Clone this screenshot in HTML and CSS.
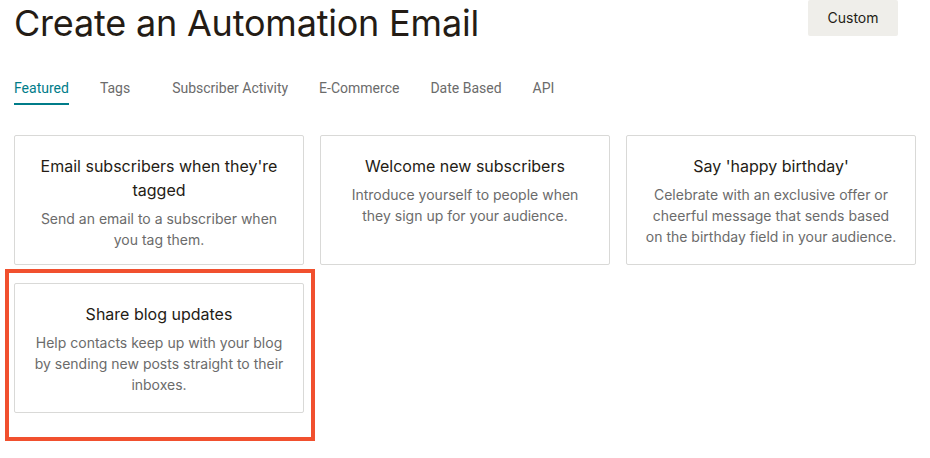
FILE: index.html
```html
<!DOCTYPE html>
<html lang="en">
<head>
<meta charset="utf-8">
<title>Create an Automation Email</title>
<link rel="stylesheet" href="styles.css">
</head>
<body>
<div class="page">
  <header class="header">
    <h1 class="title">Create an Automation Email</h1>
    <button class="custom-btn" type="button">Custom</button>
  </header>
  <nav class="tabs">
    <a class="tab is-active">Featured</a>
    <a class="tab tab-tags">Tags</a>
    <a class="tab">Subscriber Activity</a>
    <a class="tab">E-Commerce</a>
    <a class="tab">Date Based</a>
    <a class="tab">API</a>
  </nav>
  <section class="cards">
    <div class="card">
      <h2 class="card-title">Email subscribers when they're tagged</h2>
      <p class="card-desc">Send an email to a subscriber when you tag them.</p>
    </div>
    <div class="card">
      <h2 class="card-title">Welcome new subscribers</h2>
      <p class="card-desc">Introduce yourself to people when they sign up for your audience.</p>
    </div>
    <div class="card">
      <h2 class="card-title">Say 'happy birthday'</h2>
      <p class="card-desc">Celebrate with an exclusive offer or cheerful message that sends based on the birthday field in your audience.</p>
    </div>
    <div class="card card-highlighted">
      <h2 class="card-title">Share blog updates</h2>
      <p class="card-desc">Help contacts keep up with your blog by sending new posts straight to their inboxes.</p>
      <span class="highlight-box"></span>
    </div>
  </section>
</div>
</body>
</html>
```

FILE: styles.css
```css
* { box-sizing: border-box; }
html, body { margin: 0; padding: 0; background: #ffffff; }
body {
  font-family: "Inter", "Liberation Sans", sans-serif;
  color: #241c15;
  min-height: 100vh;
}

.page { padding: 0 32px 60px 14px; }

.header {
  display: flex;
  justify-content: space-between;
  align-items: flex-start;
  height: 62px;
}
.title {
  margin: 2px 0 0 0;
  font-size: 36px;
  font-weight: 400;
  line-height: 42px;
  letter-spacing: -0.2px;
  color: #241c15;
}
.custom-btn {
  width: 90px;
  height: 36px;
  border: 0;
  border-radius: 2px;
  background: #efeeea;
  color: #241c15;
  font-family: "Inter", "Liberation Sans", sans-serif;
  font-size: 14px;
  padding: 0 0 1px;
}

.tabs {
  display: flex;
  gap: 31px;
  height: 43px;
}
.tab {
  font-family: "Roboto", "Liberation Sans", sans-serif;
  font-size: 14px;
  color: #6b6b6b;
  line-height: 26px;
  height: 43px;
  padding-top: 13px;
}
.tab-tags { margin-right: 11px; }
.tab.is-active {
  color: #007c89;
  border-bottom: 2px solid #007c89;
}

.cards {
  display: grid;
  grid-template-columns: repeat(3, 290px);
  grid-auto-rows: 130px;
  column-gap: 16px;
  row-gap: 18px;
  margin-top: 30px;
}
.card {
  position: relative;
  border: 1px solid #d9d9d7;
  border-radius: 2px;
  padding: 18px 16px 14px;
  text-align: center;
}
.card-title {
  margin: 0;
  font-size: 16px;
  font-weight: 400;
  line-height: 24px;
  color: #241c15;
}
.card-desc {
  margin: 6px 0 0;
  font-size: 14px;
  line-height: 21px;
  color: #6b6b6b;
}
.highlight-box {
  position: absolute;
  left: -10px;
  top: -15px;
  width: 310px;
  height: 172px;
  border: 4px solid #f1502e;
  pointer-events: none;
}
```
